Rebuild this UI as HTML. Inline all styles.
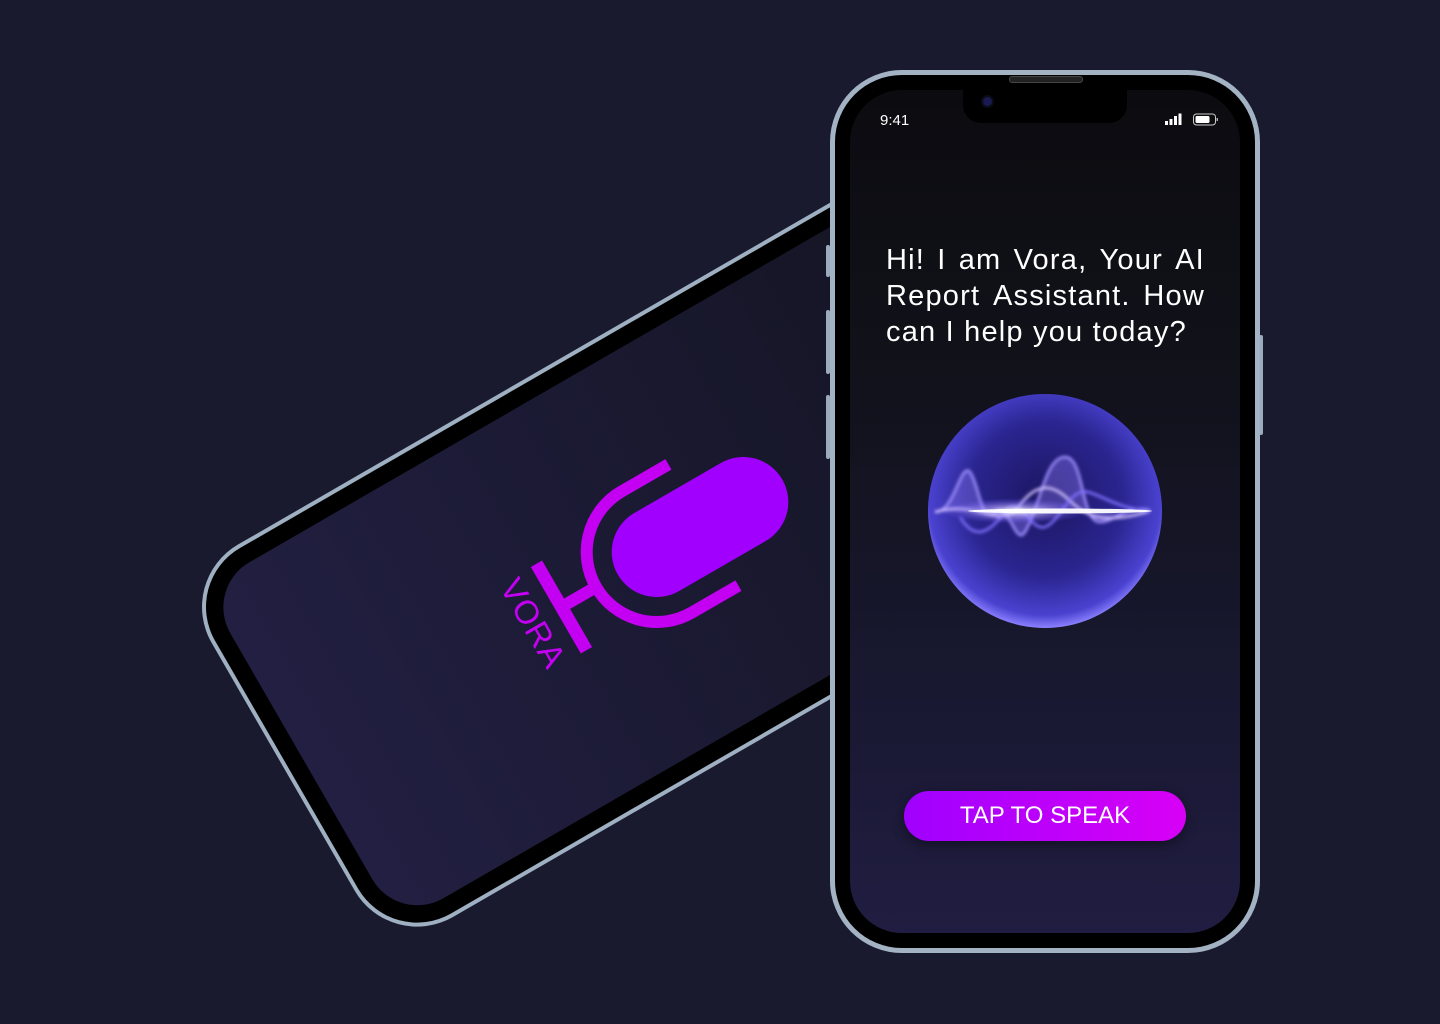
<!DOCTYPE html>
<html><head><meta charset="utf-8"><style>
html,body{margin:0;padding:0;width:1440px;height:1024px;overflow:hidden;background:#191a2e;font-family:"Liberation Sans",sans-serif}
.abs{position:absolute}
#lp{left:224px;top:331px;width:883px;height:430px;transform:rotate(-30deg);border-radius:72px;background:#9fb0c2}
#lp .blk{position:absolute;left:4px;top:4px;right:4px;bottom:4px;border-radius:68px;background:#000}
#lp .scr{position:absolute;left:17px;top:17px;right:17px;bottom:17px;border-radius:52px;background:linear-gradient(90deg,#221f42 0%,#1b1a33 45%,#141422 100%)}
#rp{left:830px;top:70px;width:430px;height:883px;border-radius:72px;background:#a3b3c4}
#rp .blk{position:absolute;left:5px;top:5px;right:5px;bottom:5px;border-radius:67px;background:#000}
#rp .scr{position:absolute;left:15px;top:15px;right:15px;bottom:15px;border-radius:52px;background:linear-gradient(180deg,#0b0b10 0%,#111119 30%,#181830 70%,#211d42 100%);overflow:hidden}
.btn{position:absolute;background:#9aabbd;border-radius:2px}
.txt{position:absolute;left:36px;width:319px;color:#fff;font-size:29px;line-height:36px;letter-spacing:1.2px}
.j{white-space:nowrap;display:flex;justify-content:space-between}
</style></head><body>
<div class="abs" id="lp"><div class="blk"><div class="scr"></div></div></div>
<svg class="abs" style="left:0;top:0" width="1440" height="1024">
 <g transform="translate(700,527) rotate(-30)">
  <rect x="-95" y="-45" width="190" height="90" rx="45" fill="#a100ff"/>
  <path d="M4,-70 H-50 A70,70 0 0 0 -50,70 H4" fill="none" stroke="#c300f2" stroke-width="12"/>
  <line x1="-120" y1="0" x2="-160" y2="0" stroke="#c300f2" stroke-width="12"/>
  <line x1="-160" y1="-50" x2="-160" y2="50" stroke="#c300f2" stroke-width="13"/>
  <text x="0" y="0" transform="translate(-204,0) rotate(90)" text-anchor="middle" font-family="Liberation Sans" font-size="33" fill="#c300f2" letter-spacing="1">VORA</text>
 </g>
</svg>
<div class="btn" style="left:826px;top:245px;width:4px;height:32px"></div>
<div class="btn" style="left:826px;top:310px;width:4px;height:64px"></div>
<div class="btn" style="left:826px;top:395px;width:4px;height:64px"></div>
<div class="btn" style="left:1259px;top:335px;width:4px;height:100px"></div>
<div class="abs" id="rp"><div class="blk"><div class="scr">
 <div class="abs" style="left:113px;top:0;width:164px;height:33px;background:#000;border-radius:0 0 18px 18px"></div>
 <div class="abs" style="left:133px;top:7px;width:9px;height:9px;border-radius:50%;background:#1a1a50;box-shadow:0 0 0 2px #0b0b18"></div>
 <div class="abs" style="left:30px;top:22px;color:#fff;font-size:15px">9:41</div>
 <svg class="abs" style="left:315px;top:23px" width="60" height="14">
  <rect x="0" y="8" width="3" height="4" fill="#fff"/><rect x="4.5" y="6" width="3" height="6" fill="#fff"/><rect x="9" y="3" width="3" height="9" fill="#fff"/><rect x="13.5" y="0.5" width="3" height="11.5" fill="#fff"/>
  <rect x="28.5" y="1" width="22" height="11" rx="3" fill="none" stroke="#ccc" stroke-width="1"/><rect x="30.5" y="3" width="14" height="7" rx="1.5" fill="#fff"/><rect x="51.5" y="5" width="1.5" height="3" fill="#aaa"/>
 </svg>
 <div class="txt" style="top:152px">
  <div class="j"><span>Hi!</span><span>I</span><span>am</span><span>Vora,</span><span>Your</span><span>AI</span></div>
  <div class="j"><span>Report</span><span>Assistant.</span><span>How</span></div>
  <div>can I help you today?</div>
 </div>
 <svg class="abs" style="left:70px;top:297px" width="250" height="250">
  <defs>
   <radialGradient id="og" cx="50%" cy="45%" r="55%">
    <stop offset="0" stop-color="#1c1660"/><stop offset="0.6" stop-color="#2a2590"/><stop offset="0.9" stop-color="#4a42d0"/><stop offset="1" stop-color="#8b80ff"/>
   </radialGradient>
   <radialGradient id="gl" cx="50%" cy="50%" r="50%">
    <stop offset="0" stop-color="#fff" stop-opacity="1"/><stop offset="0.4" stop-color="#b8a8ff" stop-opacity="0.6"/><stop offset="1" stop-color="#6650ff" stop-opacity="0"/>
   </radialGradient>
   <filter id="bl"><feGaussianBlur stdDeviation="1.5"/></filter>
  </defs>
  <circle cx="125" cy="124" r="117" fill="url(#og)"/>
  <g filter="url(#bl)" fill="none" stroke-width="2.5">
   <path d="M15,125 C35,125 40,75 50,85 C60,100 60,135 75,125 C90,115 95,160 105,145 C120,120 125,70 145,70 C165,70 160,135 180,135 C195,135 205,118 230,123" stroke="#a090ff" fill="rgba(150,130,255,0.35)"/>
   <path d="M15,125 C60,112 80,145 100,118 C115,98 130,95 148,112 C165,130 185,138 230,124" stroke="#d0c0ff"/>
   <path d="M40,130 C55,155 70,145 85,125 C100,105 110,145 125,140 C140,135 150,100 168,105 C185,110 200,122 230,124" stroke="#8070ff"/>
  </g>
  <ellipse cx="95" cy="124" rx="75" ry="13" fill="url(#gl)"/>
  <ellipse cx="140" cy="124" rx="92" ry="2.5" fill="#fff" opacity="0.95"/>
 </svg>
 <div class="abs" style="left:54px;top:701px;width:282px;height:50px;border-radius:25px;background:linear-gradient(90deg,#a000ff,#d800f6);color:#fff;font-size:24px;line-height:50px;text-align:center;box-shadow:0 4px 12px rgba(0,0,0,0.4)">TAP TO SPEAK</div>
</div></div>
 <div class="abs" style="left:179px;top:6px;width:72px;height:5px;border-radius:3px;background:#222;border:1px solid #444"></div>
</div>
</body></html>
